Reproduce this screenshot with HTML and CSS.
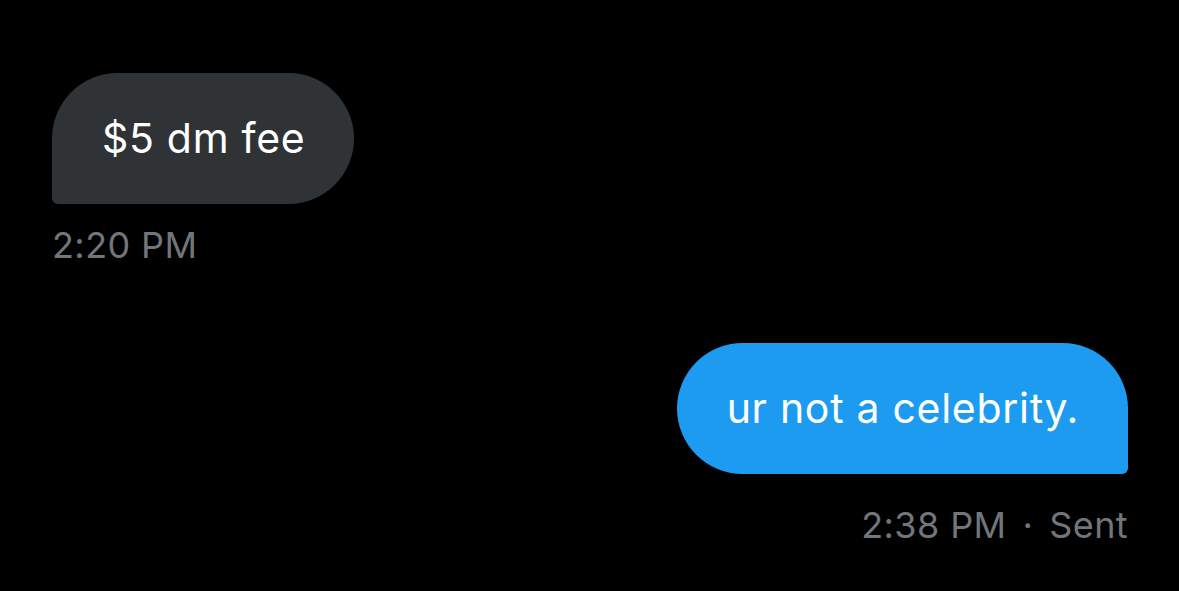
FILE: index.html
```html
<!DOCTYPE html>
<html>
<head>
<meta charset="utf-8">
<link rel="stylesheet" href="styles.css">
</head>
<body>
<div class="chat">
  <div class="msg in">
    <div class="bubble gray">$5 dm fee</div>
    <div class="meta">2:20 PM</div>
  </div>
  <div class="msg out">
    <div class="bubble blue">ur not a celebrity.</div>
    <div class="meta">2:38 PM<span class="dot">·</span>Sent</div>
  </div>
</div>
</body>
</html>
```
FILE: styles.css
```css
html, body {
  margin: 0;
  padding: 0;
  background: #000;
  height: 100%;
}
.chat {
  display: flex;
  flex-direction: column;
  padding: 73px 51px 0 52px;
  gap: 76px;
  font-family: Inter, "Noto Sans", sans-serif;
}
.msg {
  display: flex;
  flex-direction: column;
}
.msg.in { align-items: flex-start; }
.msg.out { align-items: flex-end; }
.bubble {
  height: 131px;
  box-sizing: border-box;
  display: flex;
  align-items: center;
  padding: 0 49px 2px 50px;
  font-size: 41px;
  letter-spacing: 0.7px;
  color: #fff;
  border-radius: 66px;
}
.bubble.gray {
  background: #2f3336;
  border-bottom-left-radius: 6px;
}
.bubble.blue {
  background: #1d9bf0;
  border-bottom-right-radius: 6px;
}
.meta {
  margin-top: 19px;
  font-size: 36px;
  line-height: 44px;
  letter-spacing: 0.4px;
  color: #71767b;
}
.msg.out .meta {
  margin-top: 29px;
}
.dot {
  margin: 0 16px;
}
```
